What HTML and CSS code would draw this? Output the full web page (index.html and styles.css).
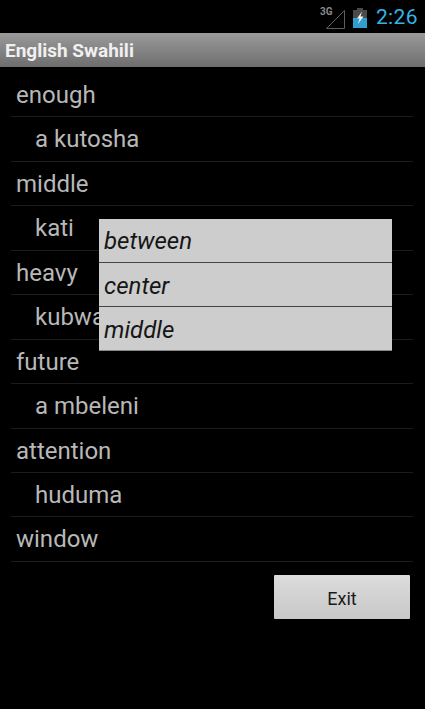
FILE: index.html
```html
<!DOCTYPE html>
<html lang="en">
<head>
  <meta charset="UTF-8">
  <title>English Swahili</title>
  <link rel="stylesheet" href="styles.css">
</head>
<body>
  <div class="screen">
    <!-- Status Bar -->
    <div class="status-bar">
      <svg class="signal" width="25" height="24" viewBox="0 0 25 24">
        <text x="0" y="10" class="signal-label">3G</text>
        <path d="M6.5 23.5 L24.5 5.5 V23.5 Z" fill="none" stroke="#5e5e5e" stroke-width="1"/>
      </svg>
      <svg class="battery" width="14" height="20" viewBox="0 0 14 20">
        <rect x="4" y="0" width="6" height="2" fill="#4a4a4a"/>
        <rect x="0" y="2" width="14" height="8" fill="#4a4a4a"/>
        <rect x="0" y="10" width="14" height="10" fill="#2f9fd0"/>
        <path d="M9 3.5 L4 10.5 H6.5 L5 16 L10.5 8.5 H7.5 Z" fill="#f2f2f2"/>
      </svg>
      <span class="clock">2:26</span>
    </div>

    <!-- Title Bar -->
    <div class="title-bar">English Swahili</div>

    <!-- Word List -->
    <div class="word-list">
      <div class="row">enough</div>
      <div class="row sub">a kutosha</div>
      <div class="row">middle</div>
      <div class="row sub">kati</div>
      <div class="row">heavy</div>
      <div class="row sub">kubwa</div>
      <div class="row">future</div>
      <div class="row sub">a mbeleni</div>
      <div class="row">attention</div>
      <div class="row sub">huduma</div>
      <div class="row">window</div>
    </div>

    <div class="actions">
      <button class="exit-btn">Exit</button>
    </div>

    <!-- Choice Popup -->
    <div class="popup">
      <div class="choice">between</div>
      <div class="choice">center</div>
      <div class="choice">middle</div>
    </div>
  </div>
</body>
</html>
```

FILE: styles.css
```css
* {
  margin: 0;
  padding: 0;
  box-sizing: border-box;
}

body {
  background-color: #000;
  font-family: 'Roboto', sans-serif;
}

.screen {
  position: relative;
  width: 425px;
  height: 709px;
  overflow: hidden;
  background-color: #000;
}

/* Status Bar */
.status-bar {
  height: 33px;
  display: flex;
  align-items: center;
  justify-content: flex-end;
  padding-right: 7px;
}

.signal {
  margin-right: 8px;
  margin-top: 1px;
}

.signal-label {
  font-family: 'Roboto', sans-serif;
  font-size: 10px;
  font-weight: 700;
  fill: #8a8a8a;
}

.battery {
  margin-right: 9px;
  margin-top: 3px;
}

.clock {
  font-size: 21px;
  color: #33b5e5;
  letter-spacing: 0.4px;
}

/* Title Bar */
.title-bar {
  height: 34px;
  line-height: 35px;
  padding-left: 5px;
  font-size: 19px;
  font-weight: 700;
  color: #f0f0f0;
  background: linear-gradient(180deg, #9a9a9a, #6e6e6e);
}

/* Word List */
.word-list {
  padding: 6px 12px 0 11px;
}

.row {
  height: 44.45px;
  line-height: 44px;
  padding-left: 5px;
  font-size: 24px;
  color: #b8b8b8;
  border-bottom: 1px solid #1c1c1c;
}

.row.sub {
  padding-left: 24px;
}

.actions {
  display: flex;
  justify-content: flex-end;
  padding: 13px 15px 0 0;
}

.exit-btn {
  width: 136px;
  height: 44px;
  padding-top: 3px;
  border: none;
  border-radius: 1px;
  font-family: 'Roboto', sans-serif;
  font-size: 18px;
  color: #1a1a1a;
  background: linear-gradient(180deg, #dcdcdc, #c8c8c8);
}

/* Choice Popup */
.popup {
  position: absolute;
  left: 99px;
  top: 219px;
  width: 293px;
  height: 132px;
  display: flex;
  flex-direction: column;
  background-color: #cdcdcd;
}

.choice {
  height: 44px;
  padding-left: 5px;
  line-height: 44px;
  font-size: 24px;
  font-style: italic;
  color: #161616;
  border-bottom: 1px solid #444;
}

.choice + .choice {
  line-height: 46px;
}

.choice:last-child {
  border-bottom: 1px solid #888;
}
```
